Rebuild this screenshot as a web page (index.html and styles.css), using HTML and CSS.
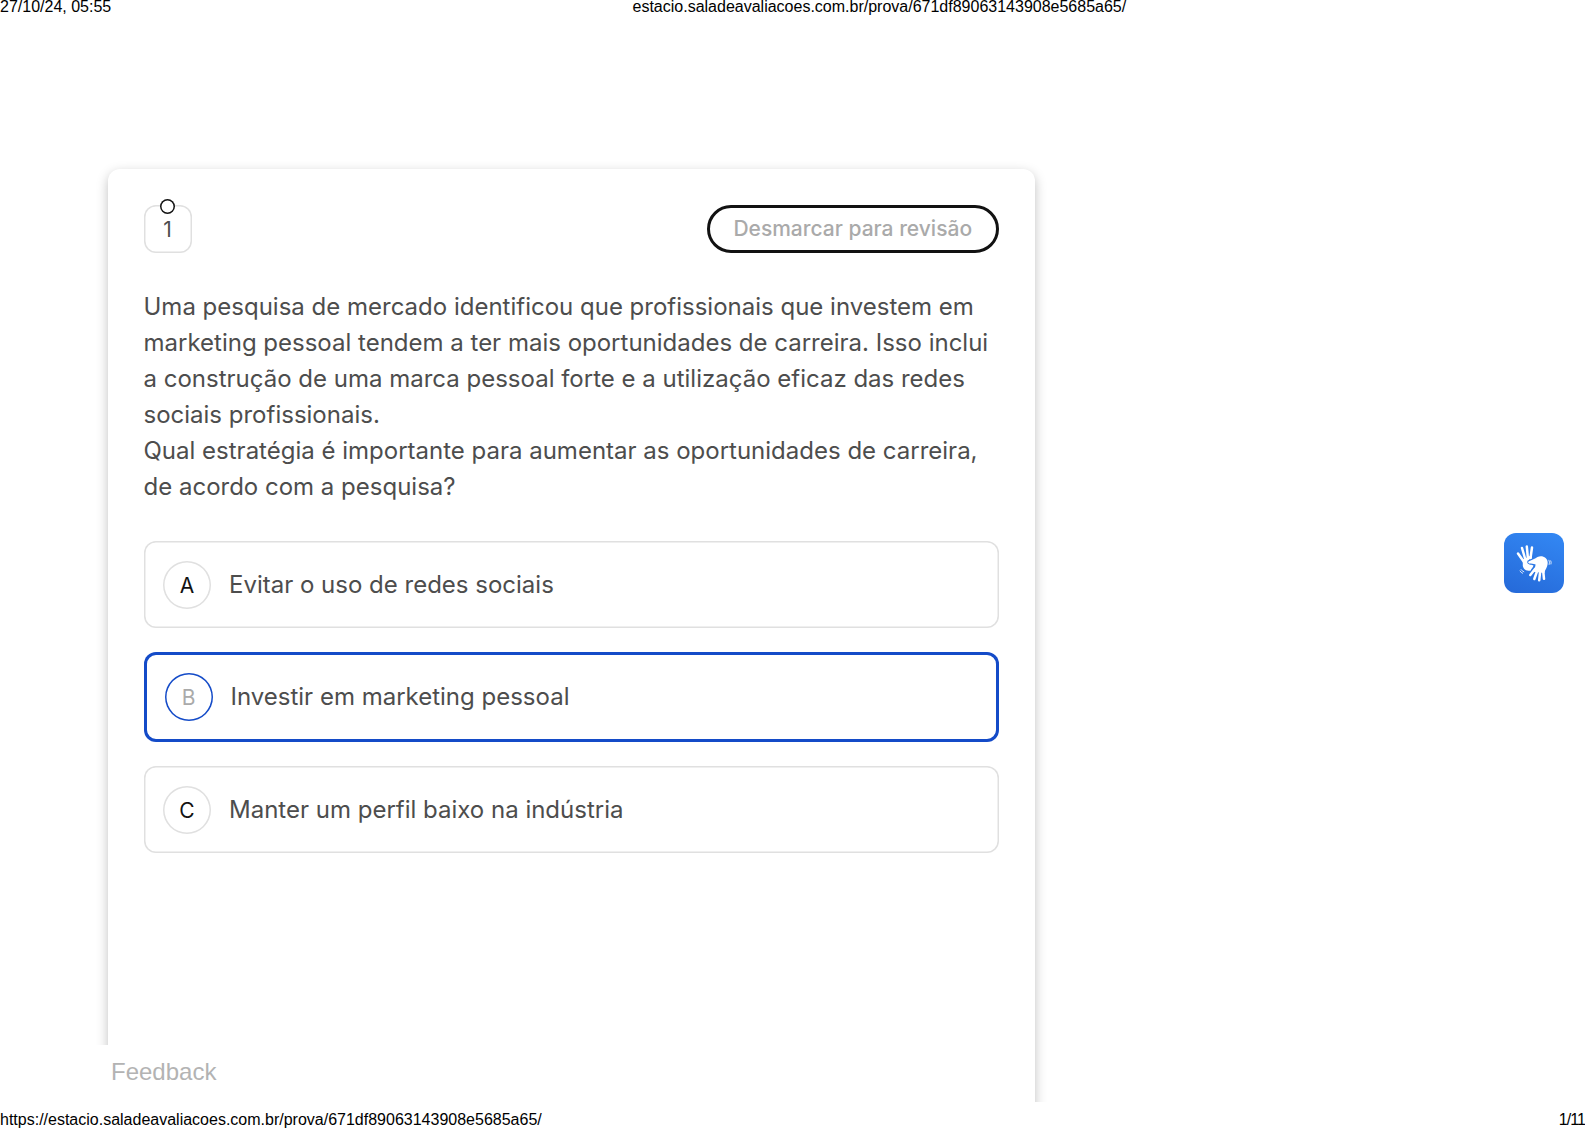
FILE: index.html
```
<!DOCTYPE html>
<html lang="pt-br">
<head>
    <meta charset="UTF-8">
    <meta name="viewport" content="width=device-width, initial-scale=1.0">
    <title>estacio.saladeavaliacoes.com.br</title>
    <link rel="stylesheet" href="styles.css">
</head>
<body>
    <header class="page-header">
        <span class="date">27/10/24, 05:55</span>
        <span class="url">estacio.saladeavaliacoes.com.br/prova/671df89063143908e5685a65/</span>
    </header>

    <main class="content">
        <section class="card">
            <div class="card-top">
                <div class="number">1<span class="dot"></span></div>
                <button class="review-btn">Desmarcar para revisão</button>
            </div>
            <div class="question">
                <p>Uma pesquisa de mercado identificou que profissionais que investem em marketing pessoal tendem a ter mais oportunidades de carreira. Isso inclui a construção de uma marca pessoal forte e a utilização eficaz das redes sociais profissionais.</p>
                <p>Qual estratégia é importante para aumentar as oportunidades de carreira, de acordo com a pesquisa?</p>
            </div>
            <div class="options">
                <div class="option">
                    <span class="letter">A</span>
                    <p>Evitar o uso de redes sociais</p>
                </div>
                <div class="option selected">
                    <span class="letter">B</span>
                    <p>Investir em marketing pessoal</p>
                </div>
                <div class="option">
                    <span class="letter">C</span>
                    <p>Manter um perfil baixo na indústria</p>
                </div>
            </div>
        </section>
        <div class="feedback">Feedback</div>
    </main>

    <footer class="page-footer">
        <span>https://estacio.saladeavaliacoes.com.br/prova/671df89063143908e5685a65/</span>
        <span class="page-count">1/11</span>
    </footer>

    <!-- botão de Libras -->
    <div class="libras">
        <svg viewBox="0 0 60 60" width="60" height="60">
            <!-- mão esquerda -->
            <g fill="none" stroke="#fff" stroke-linecap="round" stroke-width="2.5">
                <path d="M20 29 L14 20.5"/>
                <path d="M21.5 27 L18 15"/>
                <path d="M24 26 L22.8 13.5"/>
                <path d="M26.5 25 L28 14.5"/>
            </g>
            <path fill="#fff" d="M18.8 26.5 L27.7 22 L27.8 25.5 C24.5 26 22.5 28 23.5 30 C24.5 32 28 31.5 29.5 32.5 C29 34.5 27 36 26.8 37.5 C23 38.8 19.5 36.5 18.8 33Z"/>
            <!-- mão direita -->
            <g fill="none" stroke="#fff" stroke-linecap="round" stroke-width="2.5">
                <path d="M31 36 L26.3 42"/>
                <path d="M33.5 37 L30.3 46"/>
                <path d="M36.3 37 L35.2 47.3"/>
                <path d="M39 36 L40 45.8"/>
            </g>
            <path fill="#fff" d="M25 28.3 C28 27.2 31 25.5 33.5 24 C38 22 43.8 24.5 43.7 30 C43.5 34.5 41 36.5 40.5 40 L29.3 38.8 C29 36.5 31.5 34.5 31.6 31.4 C29.5 30.8 27 31 25.3 30.6 C23.8 30 23.8 28.8 25 28.3Z"/>
            <g fill="none" stroke="#fff" stroke-linecap="round" stroke-width=".8">
                <path d="M45 27.2 Q46 29 45.2 31.5"/>
                <path d="M46.8 27.8 Q47.5 29 47 31"/>
                <path d="M17 36.5 Q18 38.2 19.8 38.8"/>
                <path d="M16 38 Q17 39.8 18.6 40.3"/>
            </g>
        </svg>
    </div>
</body>
</html>
```
FILE: styles.css
```
*{
    box-sizing: border-box;
}
body{
    margin:0;
    height:1129px;
    display: flex;
    flex-direction: column;
    overflow: hidden;
    background-color: #fff;
    font-family: "Liberation Sans", Arial, sans-serif;
    font-size: 16px;
    color: #000;
}
p{
    margin:0;
}
.page-header{
    display: flex;
    height:27px;
    line-height: 18px;
    margin-top:-2px;
}
.date{
    width: 632.5px;
}
.content{
    height:1077px;
    padding:144px 0 0 108px;
    overflow: hidden;
}
.card{
    width: 927px;
    height:1000px;
    padding:36px 36px 36px 35.5px;
    border-radius: 12px;
    background-color: #fff;
    box-shadow: 0 4px 12px rgba(0,0,0,.25);
    font-family: Inter, sans-serif;
}
.card-top{
    display: flex;
    justify-content:space-between;
}
.number{
    position: relative;
    width: 48px;
    height:48px;
    line-height: 49px;
    border-radius: 12px;
    box-shadow: inset 0 0 0 1.5px #e0e0e0;
    text-align: center;
    font-size: 21px;
    color: #4d4d4d;
}
.dot{
    position: absolute;
    left:16.5px;
    top:-6px;
    width: 15px;
    height:15px;
    border-radius: 50%;
    background-color: #fff;
    box-shadow: inset 0 0 0 1.5px #121212;
}
.review-btn{
    width: 292.5px;
    height:48px;
    padding:0 0 1px;
    border: 3px solid #121212;
    border-radius: 24px;
    background-color: #fff;
    font-family: inherit;
    font-size: 21px;
    font-weight: 500;
    color: #aaa;
}
.question{
    margin:36px 0;
    font-size: 24px;
    line-height: 36px;
    color: #4d4d4d;
}
.options{
    display: flex;
    flex-direction: column;
    gap:24px;
}
.option{
    display: flex;
    align-items:center;
    gap:18px;
    padding:19.5px;
    border-radius: 12px;
    box-shadow: inset 0 0 0 1.5px #e0e0e0;
    font-size: 24px;
    line-height: 36px;
    color: #4d4d4d;
}
.option.selected{
    padding:21px;
    box-shadow: inset 0 0 0 3px #144bc8;
}
.selected p{
    padding-bottom:1px;
}
.letter{
    width: 48px;
    height:48px;
    line-height: 49px;
    border-radius: 50%;
    box-shadow: inset 0 0 0 1.5px #e0e0e0;
    text-align: center;
    font-size: 21px;
    color: #121212;
}
.selected .letter{
    box-shadow: inset 0 0 0 1.5px #144bc8;
    color: #aaa;
}
.feedback{
    position: absolute;
    left:96px;
    top:1045px;
    width: 900px;
    height:57px;
    padding-left:15px;
    line-height: 54px;
    background-color: #fff;
    font-size: 24px;
    color: #b3b3b3;
}
.page-footer{
    display: flex;
    justify-content:space-between;
    height:27px;
    padding-top:9px;
    line-height: 18px;
}
.page-count{
    letter-spacing: -.9px;
}
.libras{
    position: absolute;
    left:1504px;
    top:533px;
    width: 60px;
    height:60px;
    border-radius: 12px;
    background: linear-gradient(200deg, #3388f4, #2569d8);
}
.libras svg{
    display: block;
}
```
